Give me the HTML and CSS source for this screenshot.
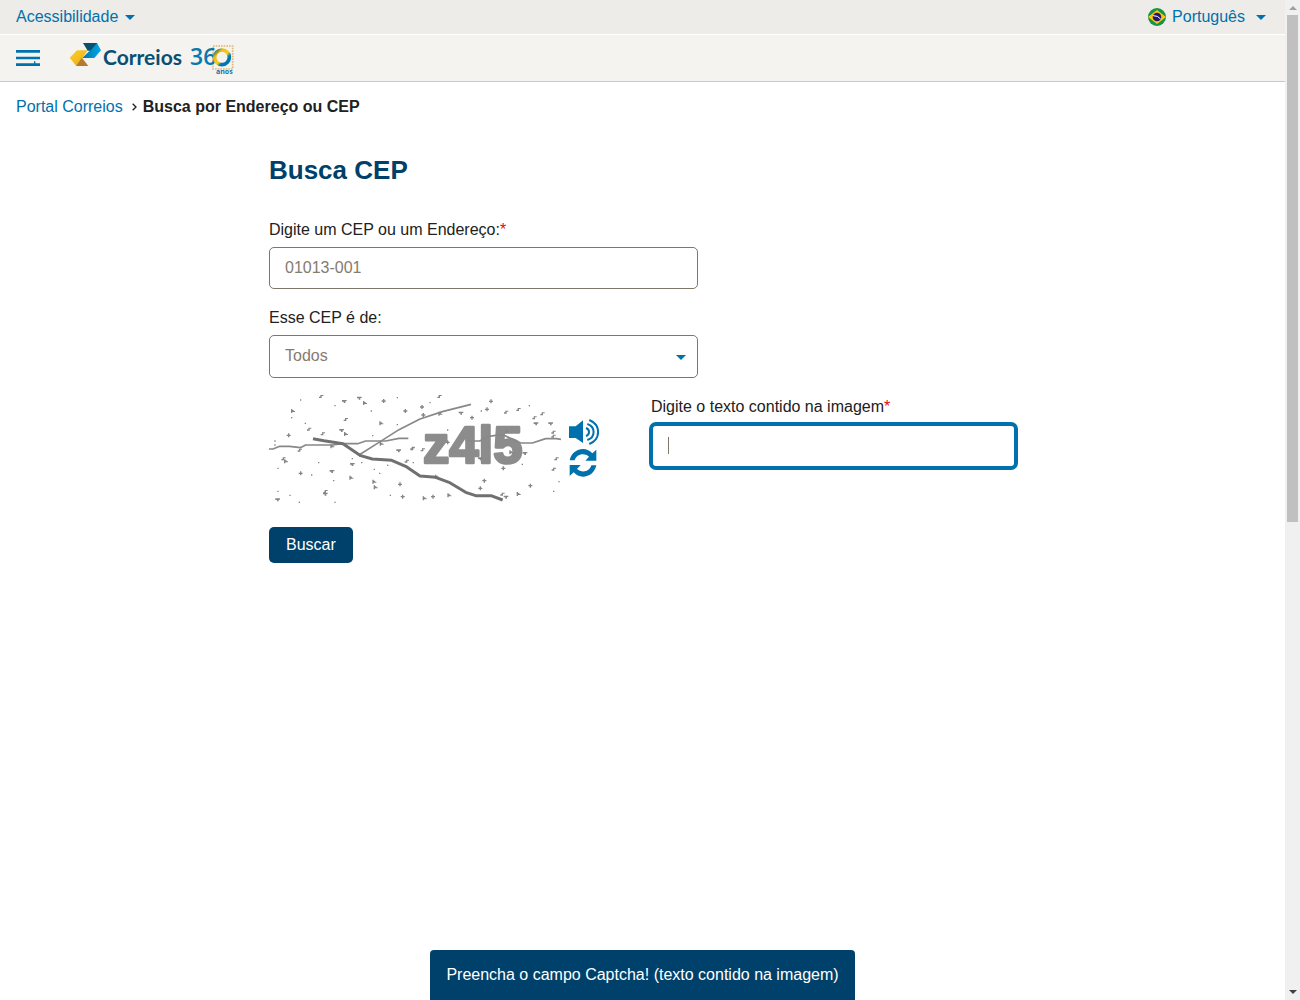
FILE: index.html
```html
<!DOCTYPE html>
<html lang="pt-BR">
<head>
<meta charset="utf-8">
<meta name="viewport" content="width=device-width, initial-scale=1">
<title>Busca CEP</title>
<link rel="stylesheet" href="styles.css">
</head>
<body>
<div class="page">
  <div class="access-bar">
    <a class="drop-link" href="#acessibilidade">Acessibilidade
      <svg class="caret" viewBox="0 0 10 5" aria-hidden="true"><path d="M0 0H10L5 5Z"/></svg></a>
    <a class="drop-link language" href="#idioma">
      <svg class="flag" viewBox="0 0 54 54" aria-hidden="true">
        <circle cx="27" cy="27" r="27" fill="#159447"/>
        <path d="M0 27L27 6L54 27L27 48Z" fill="#fdc70c"/>
        <circle cx="27" cy="27" r="13" fill="#29166f"/>
        <path d="M15 23Q29 22 38 33" fill="none" stroke="#fff" stroke-width="3"/>
      </svg><span>Português</span>
      <svg class="caret" viewBox="0 0 10 5" aria-hidden="true"><path d="M0 0H10L5 5Z"/></svg></a>
  </div>
  <header class="site-header">
    <button class="menu-button" type="button" aria-label="Menu">
      <svg viewBox="0 0 72 48" aria-hidden="true"><path d="M0 0H72V8H0ZM0 20H72V28H0ZM0 40H54V34H58V40H72V48H0Z"/></svg>
    </button>
    <a class="logo" href="#inicio" aria-label="Correios 360 anos">
      <svg viewBox="0 0 501 105">
        <defs>
          <linearGradient id="gold" x2="1" y2="1"><stop stop-color="#fbd01f"/><stop offset=".5" stop-color="#f4bd20"/><stop offset="1" stop-color="#c98924"/></linearGradient>
          <linearGradient id="sky" x2="1"><stop stop-color="#0073ad"/><stop offset="1" stop-color="#00a9e6"/></linearGradient>
          <linearGradient id="ring" x2="1" y2="1"><stop stop-color="#005b91"/><stop offset=".25" stop-color="#f3bd0c"/><stop offset=".55" stop-color="#f7cf1b"/><stop offset=".7" stop-color="#0077b0"/></linearGradient>
        </defs>
        <path d="M2 50L24 28H56L40 51L58 75H22Z" fill="url(#gold)"/>
        <path d="M22 75L38 51L57 75Z" fill="#b47a31"/>
        <path d="M84 6L96 28L76 51H40L62 29Z" fill="url(#sky)"/>
        <path d="M42 6H85L64 29H56Z" fill="#07506e"/>
        <text class="logo-name" x="102" y="73">Correios</text>
        <rect x="432" y="15" width="59" height="69" fill="none" stroke="#dfb879" stroke-width="5" stroke-dasharray="5 3"/>
        <text class="logo-years" x="363" y="73">36</text>
        <circle cx="459" cy="49" r="22" fill="#f4f3ef" stroke="url(#ring)" stroke-width="11"/>
        <text class="logo-anos" x="441" y="98">anos</text>
      </svg>
    </a>
  </header>
  <nav class="breadcrumb" aria-label="Trilha">
    <a href="#portal">Portal Correios</a>
    <svg viewBox="0 0 15 24" aria-hidden="true"><path d="M2 2L12 12L2 22"/></svg>
    <strong>Busca por Endereço ou CEP</strong>
  </nav>
  <main class="content">
    <h1>Busca CEP</h1>
    <form>
      <div class="field">
        <label for="endereco">Digite um CEP ou um Endereço:<span class="required">*</span></label>
        <input id="endereco" type="text" placeholder="01013-001">
      </div>
      <div class="field">
        <label for="tipo">Esse CEP é de:</label>
        <div class="select-box">
          <select id="tipo"><option>Todos</option></select>
          <svg class="caret" viewBox="0 0 10 5" aria-hidden="true"><path d="M0 0H10L5 5Z"/></svg>
        </div>
      </div>
      <div class="captcha-row">
        <div class="captcha">
          <svg class="captcha-image" viewBox="0 0 876 324" role="img" aria-label="Captcha">
            <defs>
              <path id="d" d="M-2-2H2V2H-2Z"/>
              <path id="p" d="M-6-2H-2V-6H2V-2H6V2H2V6H-2V2H-6Z"/>
              <path id="v" d="M-7-5H7V-1H3V4H-2V0H-7Z"/>
              <path id="g" d="M-5-6H-1V-3H3V0H7V3H-1V6H-5Z"/>
              <path id="c" d="M-2-5H7V-2H2V4H-6V0H-2Z"/>
            </defs>
            <text class="captcha-text" x="462" y="203">z4l5</text>
            <g class="noise" transform="translate(-27 -30)">
              <use href="#d" x="122" y="45"/><use href="#d" x="225" y="62"/><use href="#d" x="412" y="38"/><use href="#d" x="95" y="98"/><use href="#d" x="334" y="78"/><use href="#d" x="136" y="115"/><use href="#d" x="412" y="119"/><use href="#d" x="45" y="168"/><use href="#d" x="45" y="180"/><use href="#d" x="338" y="152"/><use href="#d" x="176" y="233"/><use href="#d" x="54" y="250"/><use href="#d" x="155" y="270"/><use href="#d" x="305" y="233"/><use href="#d" x="383" y="241"/><use href="#d" x="460" y="233"/><use href="#d" x="343" y="253"/><use href="#d" x="359" y="265"/><use href="#d" x="221" y="287"/><use href="#d" x="54" y="319"/><use href="#d" x="90" y="331"/><use href="#d" x="118" y="352"/><use href="#d" x="225" y="352"/><use href="#d" x="391" y="331"/><use href="#d" x="277" y="221"/>
              <use href="#p" x="86" y="151"/><use href="#p" x="371" y="48"/><use href="#p" x="436" y="78"/><use href="#p" x="122" y="265"/><use href="#p" x="420" y="298"/><use href="#p" x="428" y="335"/>
              <use href="#v" x="253" y="50"/><use href="#v" x="298" y="40"/><use href="#v" x="245" y="137"/><use href="#v" x="416" y="198"/><use href="#v" x="277" y="239"/><use href="#v" x="216" y="260"/><use href="#v" x="53" y="345"/><use href="#v" x="196" y="328"/>
              <use href="#g" x="314" y="54"/><use href="#g" x="98" y="78"/><use href="#g" x="363" y="115"/><use href="#g" x="257" y="147"/><use href="#g" x="216" y="184"/><use href="#g" x="77" y="229"/><use href="#g" x="273" y="278"/><use href="#g" x="342" y="290"/><use href="#g" x="346" y="307"/><use href="#g" x="364" y="176"/>
              <use href="#c" x="183" y="35"/><use href="#c" x="147" y="133"/><use href="#c" x="257" y="104"/><use href="#c" x="188" y="147"/><use href="#c" x="119" y="196"/><use href="#c" x="457" y="190"/><use href="#c" x="440" y="229"/><use href="#c" x="70" y="222"/><use href="#c" x="196" y="320"/>
            </g>
            <g class="noise" transform="translate(423 -30)">
              <use href="#d" x="60" y="53"/><use href="#d" x="214" y="78"/><use href="#d" x="358" y="62"/><use href="#d" x="337" y="238"/><use href="#d" x="447" y="290"/><use href="#d" x="431" y="319"/><use href="#d" x="113" y="135"/>
              <use href="#p" x="243" y="49"/><use href="#p" x="36" y="66"/><use href="#p" x="231" y="73"/><use href="#p" x="40" y="90"/><use href="#p" x="186" y="98"/><use href="#p" x="280" y="250"/><use href="#p" x="223" y="287"/><use href="#p" x="211" y="310"/><use href="#p" x="361" y="302"/><use href="#p" x="69" y="335"/><use href="#p" x="113" y="172"/>
              <use href="#v" x="153" y="85"/><use href="#v" x="378" y="117"/><use href="#v" x="422" y="117"/><use href="#v" x="288" y="337"/><use href="#v" x="345" y="206"/><use href="#v" x="211" y="222"/>
              <use href="#g" x="117" y="331"/><use href="#g" x="43" y="340"/><use href="#g" x="325" y="327"/><use href="#g" x="291" y="139"/><use href="#g" x="80" y="275"/><use href="#g" x="90" y="86"/><use href="#g" x="303" y="202"/>
              <use href="#c" x="88" y="35"/><use href="#c" x="288" y="82"/><use href="#c" x="325" y="74"/><use href="#c" x="397" y="87"/><use href="#c" x="373" y="99"/><use href="#c" x="430" y="142"/><use href="#c" x="430" y="154"/><use href="#c" x="8" y="192"/><use href="#c" x="38" y="195"/><use href="#c" x="439" y="222"/><use href="#c" x="431" y="253"/><use href="#c" x="277" y="328"/>
            </g>
            <path class="line thin" d="M0 162H12L32 154H62L94 158L110 150H190L220 146H266L290 138H350L390 130H418"/>
            <path class="line thin" d="M270 180L330 142L390 104L453 72L520 50L606 28"/>
            <path class="line thin" d="M591 138H632L660 124L680 121H705L725 130L755 144H790L830 131H862L876 133"/>
            <path class="line" d="M132 131L165 137L222 146L275 182L310 192L368 196L410 214L453 243L500 247L540 262L590 292L620 302H666L701 315"/>
          </svg>
          <div class="captcha-tools">
            <button type="button" aria-label="Ouvir o captcha">
              <svg class="sound" viewBox="0 0 90 78" aria-hidden="true"><path d="M0 22H20L42 4V72L20 57H0Z"/><path class="waves" d="M51 27C63 31 63 47 51 51M55 15C80 23 80 55 55 63M61 3C96 18 96 60 61 75"/></svg>
            </button>
            <button type="button" aria-label="Trocar o captcha">
              <svg class="refresh" viewBox="0 0 84 84" aria-hidden="true"><path d="M2 34C6 12 24 0 42 0C53 0 63 5 70 13L82 2V35H49L60 23C45 10 22 15 17 34Z"/><path d="M82 49C78 71 60 83 42 83C31 83 21 78 14 70L2 81V48H35L24 60C39 73 62 68 67 49Z"/></svg>
            </button>
          </div>
        </div>
        <div class="field">
          <label for="texto">Digite o texto contido na imagem<span class="required">*</span></label>
          <div class="focus-box"><input id="texto" class="focused" type="text"><span class="cursor"></span></div>
        </div>
      </div>
      <button class="submit" type="button">Buscar</button>
    </form>
  </main>
</div>
<div class="scrollbar" aria-hidden="true">
  <svg class="up" viewBox="0 0 8 4"><path d="M4 0L8 4H0Z"/></svg>
  <div class="track"><div class="thumb"></div></div>
  <svg class="down" viewBox="0 0 8 4"><path d="M0 0H8L4 4Z"/></svg>
</div>
<div class="toast-area"><div class="toast" role="alert">Preencha o campo Captcha! (texto contido na imagem)</div></div>
</body>
</html>
```
FILE: styles.css
```css
* { box-sizing: border-box; }
body {
  margin: 0;
  min-height: 100vh;
  display: grid;
  grid-template-columns: 1fr 15px;
  background: #fff;
  color: #212121;
  font: 16px/24px "Liberation Sans", Arial, sans-serif;
}
a { color: #0071ad; text-decoration: none; }
svg { display: block; flex: none; }
button, input, select { font: inherit; }
.caret { width: 10px; height: 5px; fill: #0071ad; }

.access-bar {
  display: flex;
  justify-content: space-between;
  align-items: center;
  height: 35px;
  padding: 0 19px 0 16px;
  background: #edece8;
  border-bottom: 1px solid #fff;
}
.drop-link { display: flex; align-items: center; gap: 7px; }
.language { gap: 6px; }
.language .caret { margin-left: 5px; }
.flag { width: 18px; height: 18px; }

.site-header {
  display: flex;
  align-items: center;
  gap: 29px;
  height: 47px;
  padding: 0 16px;
  background: #f4f3ef;
  border-bottom: 1px solid #ffd400;
}
.menu-button { padding: 0; border: 0; background: none; }
.menu-button svg { width: 24px; height: 16px; fill: #0071ad; }
.logo svg { width: 167px; height: 35px; }
.logo-name { font: 700 63px Lato, sans-serif; fill: #074f75; }
.logo-years { font: 600 69px "Open Sans", sans-serif; fill: #0878ae; }
.logo-anos { font: 700 21px "Open Sans", sans-serif; fill: #0878ae; }

.breadcrumb { display: flex; align-items: center; padding: 13px 16px 12px; }
.breadcrumb svg { width: 5px; height: 8px; margin: 0 6px 0 9px; fill: none; stroke: #212121; stroke-width: 4; }

.content { max-width: 747px; margin: 0 auto; }
h1 { margin: 22px 0 31px; color: #00416b; font-size: 26px; line-height: 34px; }
label { display: block; margin-bottom: 5px; }
.required { color: #e30613; }
form > .field { max-width: 429px; margin-bottom: 17px; }
input, select {
  display: block;
  width: 100%;
  height: 42px;
  padding: 0 15px;
  border: 1px solid #80756a;
  border-radius: 5px;
  background: #fff;
  color: #857b6f;
  outline: 0;
}
select { height: 43px; padding-bottom: 2px; appearance: none; }
input::placeholder { color: #857b6f; opacity: 1; }
.select-box, .focus-box { position: relative; }
.select-box .caret { position: absolute; right: 12px; top: 20px; pointer-events: none; }

.captcha-row { display: grid; grid-template-columns: 1fr 365px; margin-bottom: 24px; }
.captcha { display: flex; align-items: center; gap: 8px; }
.captcha-image { width: 292px; height: 108px; }
.captcha-text { font: 700 158px "Liberation Sans", sans-serif; fill: #8c8c8c; stroke: #8c8c8c; stroke-width: 8; stroke-linejoin: round; }
.noise { fill: #858585; }
.line { fill: none; stroke: #707070; stroke-width: 9; stroke-linejoin: round; }
.line.thin { stroke: #888; stroke-width: 5; }
.captcha-tools { display: grid; gap: 4px; padding-bottom: 2px; }
.captcha-tools button { padding: 0; border: 0; background: none; }
.captcha-tools svg { fill: #0071ad; }
.captcha-tools .waves { fill: none; stroke: #0071ad; stroke-width: 6; }
.sound { width: 30px; height: 26px; }
.refresh { width: 28px; height: 28px; }
.focused { height: 44px; border: 2px solid #0071ad; box-shadow: 0 0 0 2px #0071ad; caret-color: transparent; }
.cursor { position: absolute; left: 17px; top: 13px; width: 1px; height: 17px; background: #80756a; }
.submit { height: 36px; padding: 0 17px; border: 0; border-radius: 5px; background: #00416b; color: #fff; }

.scrollbar { display: flex; flex-direction: column; align-items: center; padding: 6px 0; background: #f0f0f0; }
.scrollbar svg { width: 8px; height: 4px; }
.up { fill: #a0a0a0; }
.down { fill: #404040; }
.track { flex: 1; width: 11px; margin: 5px 0; }
.thumb { height: 52.3%; background: #c0c0c0; }

.toast-area { position: fixed; left: 0; right: 15px; bottom: 0; display: flex; justify-content: center; pointer-events: none; }
.toast { padding: 13px 16px; border-radius: 4px 4px 0 0; background: #00416b; color: #fff; }
```
